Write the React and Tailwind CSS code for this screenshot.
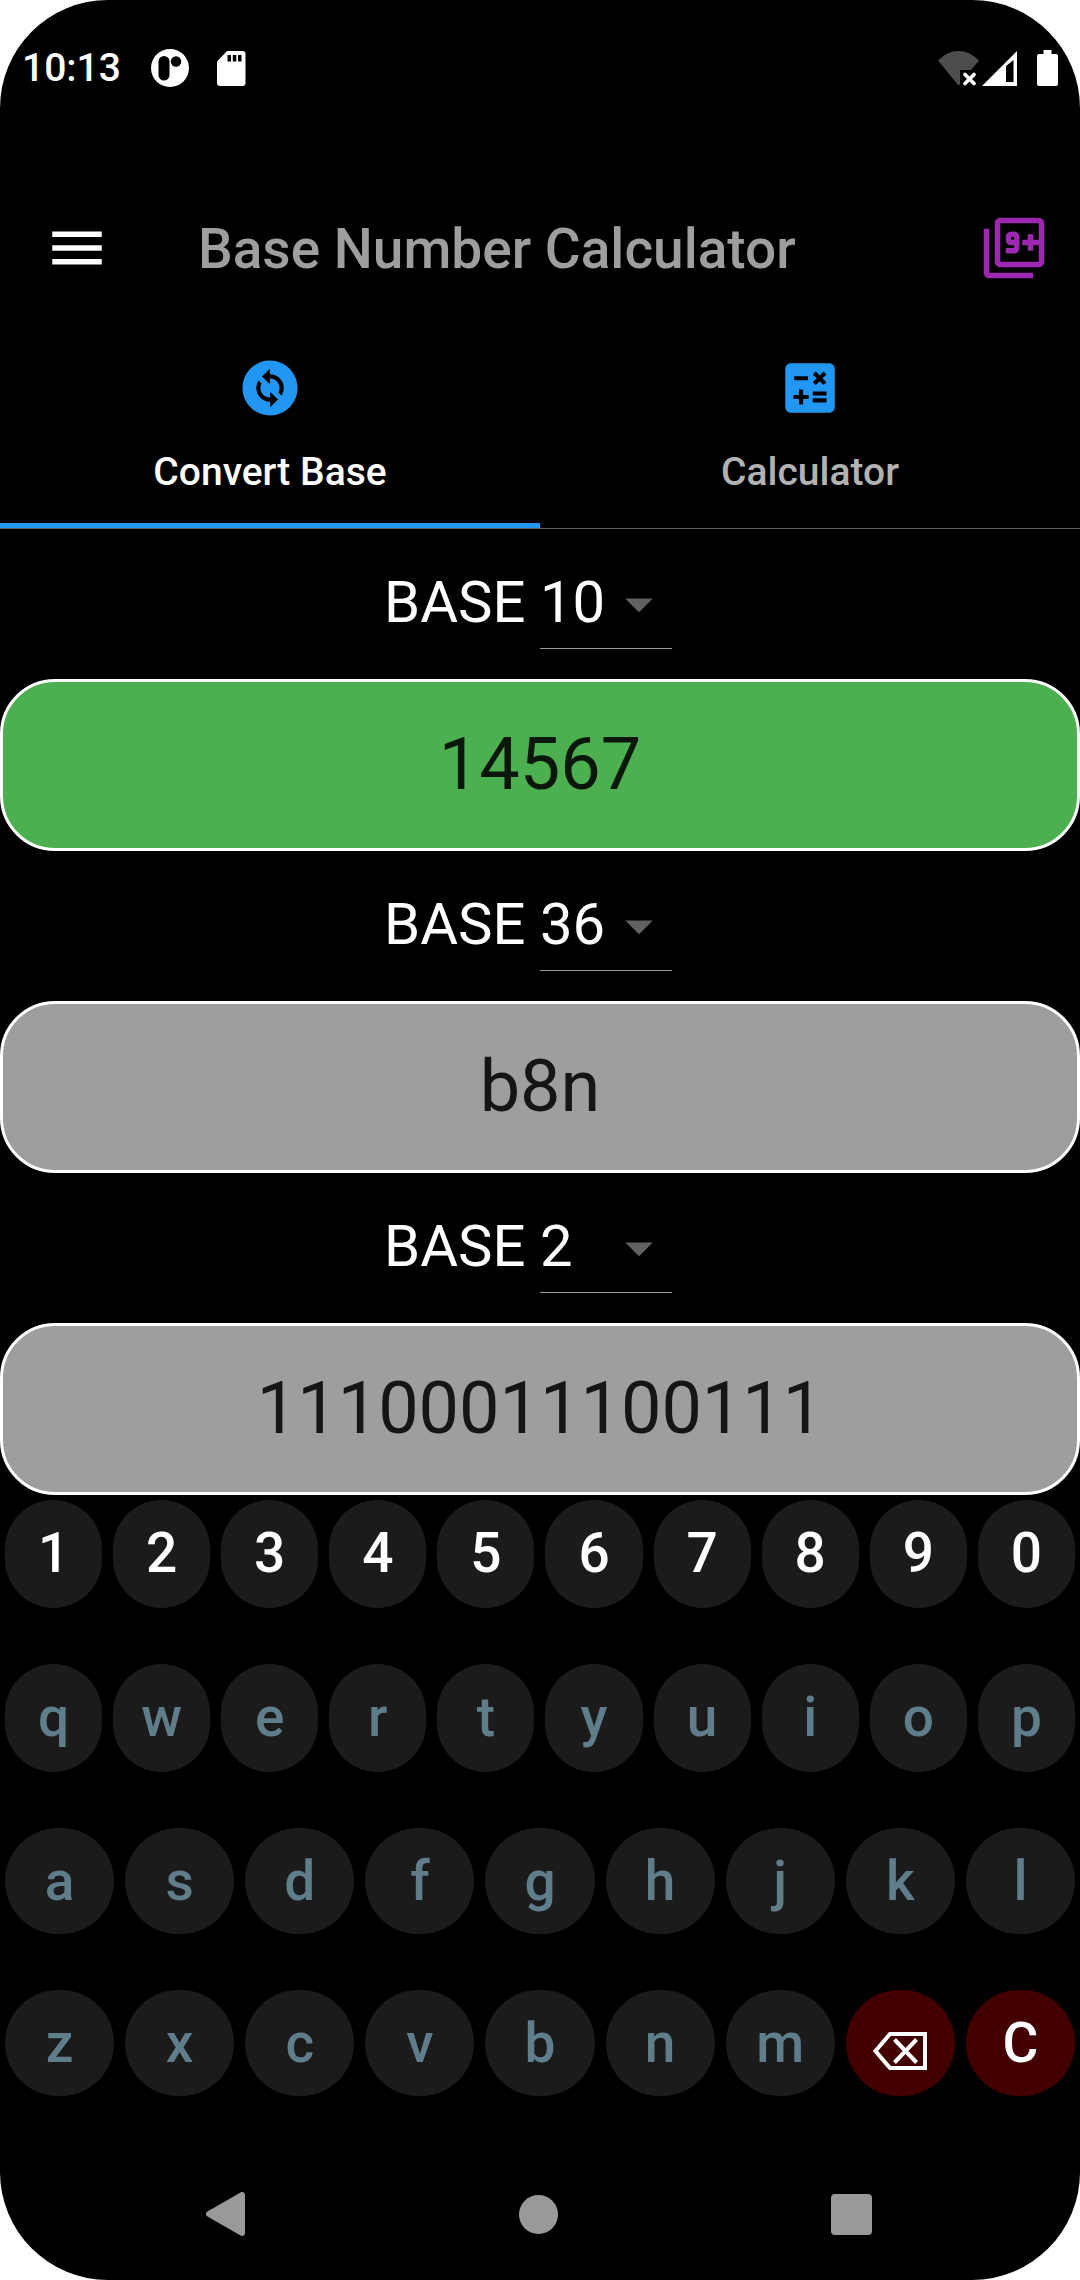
import { useState } from "react";
import { MdArrowDropDown, MdCalculate, MdChangeCircle, MdFilter9Plus, MdMenu } from "react-icons/md";

const FIELDS = [
  { id: "first", base: "10", value: "14567", active: true },
  { id: "second", base: "36", value: "b8n", active: false },
  { id: "third", base: "2", value: "11100011100111", active: false },
];

const BASES = Array.from({ length: 35 }, (_, i) => String(i + 2));

const KEY_ROWS = [
  ["1", "2", "3", "4", "5", "6", "7", "8", "9", "0"],
  ["q", "w", "e", "r", "t", "y", "u", "i", "o", "p"],
  ["a", "s", "d", "f", "g", "h", "j", "k", "l"],
  ["z", "x", "c", "v", "b", "n", "m", "delete", "C"],
];

function StatusBar() {
  return (
    <div className="flex h-[136px] items-center justify-between pr-[22px] pl-[22px]">
      <div className="flex items-center">
        <span className="text-[39px] leading-[46px] font-medium">10:13</span>
        <svg className="ml-[30px] size-[38px]" viewBox="0 0 38 38">
          <circle cx="19" cy="19" r="19" fill="#fff" />
          <rect x="7.500" y="7" width="11" height="24.500" rx="5.500" fill="#000" />
          <circle cx="25" cy="12.500" r="5.200" fill="#000" />
        </svg>
        <svg className="ml-[28px] h-[35px] w-[29px]" viewBox="0 0 29 35">
          <path d="M10 0H25.500Q28.500 0 28.500 3V32Q28.500 35 25.500 35H3Q0 35 0 32V10.500Z" fill="#fff" />
          <path d="M10.500 4h3.500v6.500h-3.500zM15.800 4h3.500v6.500h-3.500zM21 4h3.500v6.500h-3.500z" fill="#000" />
        </svg>
      </div>
      <div className="flex items-center">
        <svg className="h-[35px] w-[42px]" viewBox="0 0 42 35">
          <path d="M0 9.500Q9 0 20.500 0T41 9.500L33 19H22V33L20.500 34.500Z" fill="#4d4d4d" />
          <path d="M27 23.500l9 9m0-9l-9 9" stroke="#fff" strokeWidth="3.600" strokeLinecap="round" />
        </svg>
        <svg className="ml-[2px] h-[35px] w-[35px]" viewBox="0 0 35 35">
          <path fillRule="evenodd" d="M0 35L35 0V35ZM24 15V31H31.500V9Z" fill="#fff" />
        </svg>
        <svg className="ml-[20px] h-[36px] w-[21px]" viewBox="0 0 21 36">
          <path d="M6.500 0h8v4H19Q21 4 21 6V34Q21 36 19 36H2Q0 36 0 34V6Q0 4 2 4H6.500Z" fill="#fff" />
        </svg>
      </div>
    </div>
  );
}

function Header() {
  return (
    <header className="flex h-[160px] items-center justify-between pt-[64px] pr-[33px] pl-[44px]">
      <div className="flex items-center">
        <button type="button" aria-label="Menu">
          <MdMenu className="size-[66px]" />
        </button>
        <h1 className="ml-[88px] pt-[2px] text-[55px] leading-[66px] font-medium text-[#9e9e9e]">
          Base Number Calculator
        </h1>
      </div>
      <button type="button" aria-label="More apps" className="text-[#9c27b0]">
        <MdFilter9Plus className="size-[66px]" />
      </button>
    </header>
  );
}

function Tab({ icon: Icon, label, selected, onSelect }) {
  return (
    <button
      type="button"
      role="tab"
      aria-selected={selected}
      onClick={onSelect}
      className={
        selected
          ? "flex flex-1 flex-col items-center border-b-[5px] border-[#2196f3] text-white"
          : "flex flex-1 flex-col items-center border-b-[5px] border-transparent text-[#b2b2b2]"
      }
    >
      <Icon className="size-[66px] text-[#2196f3]" />
      <span className="mt-[28px] mb-[28px] text-[39px] leading-[46px] font-medium">{label}</span>
    </button>
  );
}

function BaseField({ field, base, onBase }) {
  return (
    <section>
      <div className="flex h-[150px] justify-center pt-[31px] pr-[24px]">
        <label htmlFor={field.id} className="text-[58px] leading-[84px] whitespace-pre">
          {"BASE "}
        </label>
        <div className="relative h-[89px] w-[132px] border-b border-[#9a9a9a]">
          <select
            id={field.id}
            value={base}
            onChange={(e) => onBase(e.target.value)}
            className="block h-[84px] w-full appearance-none bg-transparent text-[58px] leading-[84px] outline-none"
          >
            {BASES.map((b) => (
              <option key={b} value={b} className="bg-black">
                {b}
              </option>
            ))}
          </select>
          <MdArrowDropDown className="pointer-events-none absolute top-[11px] right-0 size-[66px] text-[#616161]" />
        </div>
      </div>
      <input
        readOnly
        aria-label={"Value in base " + base}
        value={field.value}
        className={
          field.active
            ? "block h-[172px] w-full rounded-[55px] border-[3px] border-white bg-[#4caf50] pb-[2px] text-center text-[72px] text-[#0a170a] outline-none"
            : "block h-[172px] w-full rounded-[55px] border-[3px] border-white bg-[#9e9e9e] pb-[2px] text-center text-[72px] text-[#151515] outline-none"
        }
      />
    </section>
  );
}

function BackspaceGlyph() {
  return (
    <svg className="mt-[16px] h-[38px] w-[54px]" viewBox="0 0 54 38" fill="none" stroke="#fff">
      <path d="M2.500 19L17 2H52V36H17Z" strokeWidth="4" />
      <path d="M21.500 7.500l22 23m0-23l-22 23" strokeWidth="4" />
    </svg>
  );
}

function Key({ name, digit }) {
  const danger = name === "delete" || name === "C";
  const tone = danger
    ? "bg-[#430000] text-white"
    : digit
      ? "bg-[#1b1b1b] text-white"
      : "bg-[#1b1b1b] text-[#607d8b]";
  return (
    <button
      type="button"
      aria-label={name === "C" ? "Clear" : name}
      className={"flex flex-1 items-center justify-center rounded-full text-[55px] leading-[64px] font-medium " + tone}
    >
      {name === "delete" ? <BackspaceGlyph /> : name}
    </button>
  );
}

function Keyboard() {
  return (
    <div className="flex flex-col gap-[56px] pt-[5px]">
      {KEY_ROWS.map((row, i) => (
        <div
          key={row[0]}
          className={
            i < 2
              ? "flex h-[108px] gap-[11px] px-[5px] *:pb-[2px]"
              : "flex h-[106px] gap-[11px] px-[5px]"
          }
        >
          {row.map((k) => (
            <Key key={k} name={k} digit={i === 0} />
          ))}
        </div>
      ))}
    </div>
  );
}

function NavBar() {
  return (
    <nav className="mt-auto flex h-[132px] items-center justify-between pr-[196px] pl-[193px]">
      <button type="button" aria-label="Back" className="flex size-[66px] items-center justify-center">
        <svg className="h-[44px] w-[40px]" viewBox="0 0 40 44">
          <path d="M3 22L36 3V41Z" fill="#999" stroke="#999" strokeWidth="6" strokeLinejoin="round" />
        </svg>
      </button>
      <button type="button" aria-label="Home" className="flex size-[66px] items-center justify-center">
        <span className="size-[39px] rounded-full bg-[#999]" />
      </button>
      <button type="button" aria-label="Recent apps" className="flex size-[66px] items-center justify-center">
        <span className="size-[41px] rounded-[4px] bg-[#999]" />
      </button>
    </nav>
  );
}

export default function App() {
  const [tab, setTab] = useState("convert");
  const [bases, setBases] = useState(FIELDS.map((f) => f.base));
  return (
    <div className="bg-white">
      <div className="flex min-h-screen flex-col overflow-hidden rounded-[108px] bg-black font-[Roboto,sans-serif] text-white">
        <StatusBar />
        <Header />
        <main>
          <div role="tablist" className="flex border-b border-[#606060] pt-[59px]">
            <Tab icon={MdChangeCircle} label="Convert Base" selected={tab === "convert"} onSelect={() => setTab("convert")} />
            <Tab icon={MdCalculate} label="Calculator" selected={tab === "calculator"} onSelect={() => setTab("calculator")} />
          </div>
          {FIELDS.map((f, i) => (
            <BaseField
              key={f.id}
              field={f}
              base={bases[i]}
              onBase={(b) => setBases(bases.map((old, j) => (j === i ? b : old)))}
            />
          ))}
          <Keyboard />
        </main>
        <NavBar />
      </div>
    </div>
  );
}
